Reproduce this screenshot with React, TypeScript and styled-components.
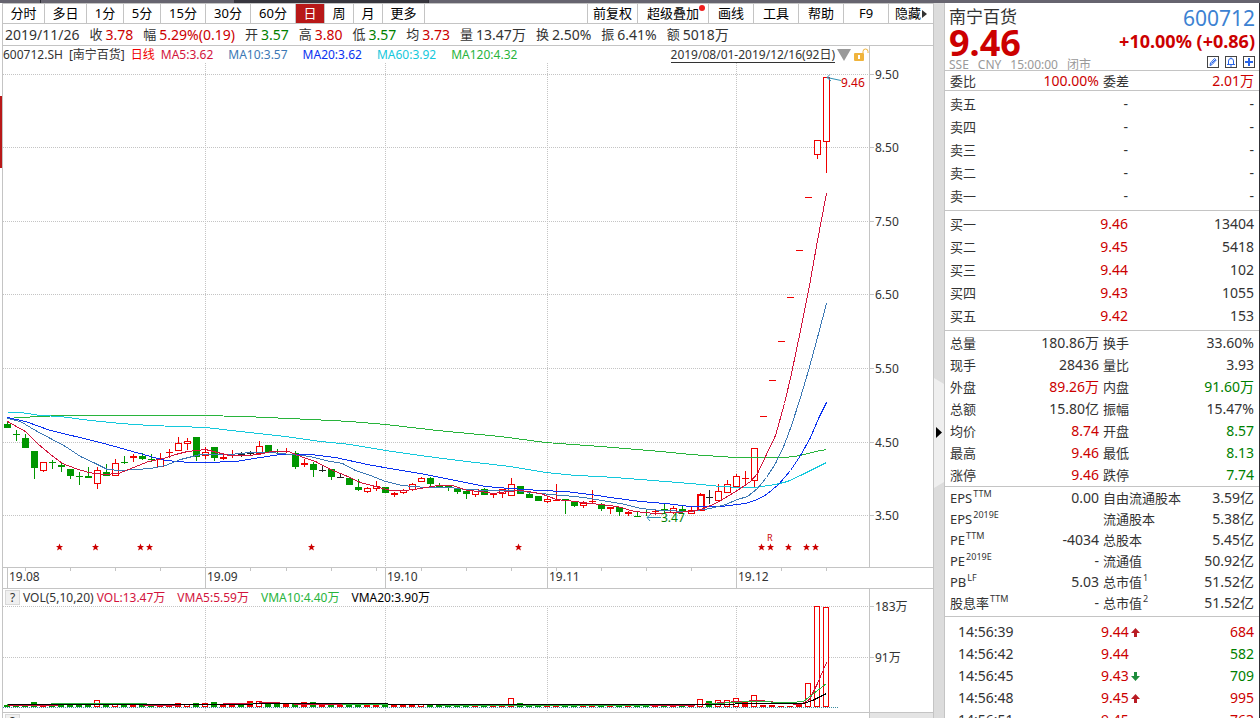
import React from "react";
import styled, { createGlobalStyle } from "styled-components";

const RED = "#cc0000";
const GREEN = "#008000";
const TEXT = "#333333";
const LINE = "#c4c4c4";
const UP = "#f00000";
const DOWN = "#009600";
const MA5 = "#d2143c";
const MA10 = "#3c78b4";
const MA20 = "#0a32f0";
const MA60 = "#14c8dc";
const MA120 = "#28b43c";

const GlobalStyle = createGlobalStyle`
  * { box-sizing: border-box; }
  body {
    margin: 0;
    background: #ffffff;
    color: ${TEXT};
    font-family: "Noto Sans", "Noto Sans CJK SC", sans-serif;
    font-size: 13px;
  }
  button {
    margin: 0;
    padding: 0;
    border: 0;
    background: none;
    color: inherit;
    font: inherit;
    cursor: pointer;
  }
  svg { display: block; }
`;

const Screen = styled.div`
  display: flex;
  flex-direction: column;
  height: 100vh;
  overflow: hidden;
`;
const TopStrip = styled.div`
  flex: none;
  height: 3px;
  background: linear-gradient(
    to right,
    #66646f 40px, #2c2c34 40px, #2c2c34 41px, #66646f 41px, #66646f 234px,
    #37363e 234px, #37363e 428px, #2c2c34 428px, #2c2c34 429px, #66646f 429px
  );
`;
const Body = styled.div`
  display: flex;
  flex: 1;
  min-height: 0;
`;

const Gutter = styled.div`
  display: flex;
  flex-direction: column;
  flex: none;
  width: 3px;
  padding-top: 93px;
  border-right: 1px solid ${LINE};
`;
const ActiveMark = styled.div`
  height: 72px;
  background: #b81818;
`;

const Main = styled.main`
  display: flex;
  flex: 1;
  flex-direction: column;
  min-width: 0;
  border-right: 1px solid ${LINE};
`;

const Toolbar = styled.nav`
  display: flex;
  flex: none;
  height: 21px;
  border-top: 1px solid ${LINE};
  border-bottom: 1px solid ${LINE};
  color: #000000;
`;
const Spacer = styled.div`
  flex: 1;
`;
const PeriodButton = styled.button<{ $width: number; $active?: boolean }>`
  flex: none;
  width: ${(p) => p.$width}px;
  border-right: 1px solid ${LINE};
  background: ${(p) => (p.$active ? "#b81818" : "transparent")};
  color: ${(p) => (p.$active ? "#ffffff" : "inherit")};
  line-height: 19px;
  white-space: nowrap;
`;
const ToolButton = styled.button<{ $wide?: boolean }>`
  position: relative;
  display: flex;
  align-items: center;
  justify-content: center;
  min-width: 45px;
  padding: 0 ${(p) => (p.$wide ? 9 : 5)}px;
  border-left: 1px solid ${LINE};
  line-height: 19px;
  white-space: nowrap;
`;
const NewDot = styled.span`
  position: absolute;
  top: 1px;
  right: 3px;
  width: 6px;
  height: 6px;
  border-radius: 50%;
  background: #f01e1e;
`;

const QuoteRow = styled.div`
  display: flex;
  flex: none;
  align-items: center;
  gap: 10px;
  height: 22px;
  padding-left: 2px;
  border-bottom: 1px solid ${LINE};
  font-size: 14px;
  line-height: 21px;
  white-space: nowrap;
`;
const QuoteItem = styled.span`
  display: flex;
  gap: 3px;
`;
const QuoteLabel = styled.span`
  font-size: 13px;
`;
const Colored = styled.span<{ $color?: string }>`
  color: ${(p) => p.$color ?? "inherit"};
`;

const ChartRow = styled.section<{ $height: number }>`
  display: flex;
  flex: none;
  height: ${(p) => p.$height}px;
  border-bottom: 1px solid ${LINE};
`;
const Plot = styled.div`
  flex: 1;
  min-width: 0;
  overflow: hidden;
`;
const Scale = styled.div`
  flex: none;
  width: 64px;
  border-left: 1px solid ${LINE};
`;
const Legend = styled.div<{ $gap: number }>`
  display: flex;
  align-items: center;
  gap: ${(p) => p.$gap}px;
  height: 17px;
  font-size: 12px;
  line-height: 17px;
  white-space: nowrap;
`;
const LegendTitle = styled.span<{ $gap: number }>`
  display: flex;
  align-items: center;
  gap: ${(p) => p.$gap}px;
`;
const RangeTools = styled.div`
  display: flex;
  align-items: center;
  gap: 2px;
  margin-left: auto;
`;
const RangeButton = styled.button`
  border-bottom: 1px solid ${TEXT};
  line-height: 15px;
`;
const HelpButton = styled.button`
  width: 15px;
  height: 15px;
  margin-left: 2px;
  border: 1px solid #d8d8d8;
  background: #f0f0f0;
  font-size: 12px;
  line-height: 13px;
`;
const TimeAxis = styled.div`
  flex: none;
  height: 21px;
  border-bottom: 1px solid ${LINE};
`;
const NextPane = styled.div`
  display: flex;
  flex: 1;
  min-height: 0;
  overflow: hidden;
  padding-top: 1px;
`;
const NextScale = styled.div`
  width: 64px;
  margin: -1px 0 0 auto;
  border-left: 1px solid ${LINE};
  background: #e4e4e4;
`;
const Drawing = styled.svg`
  width: 100%;
`;

const Grip = styled.button`
  display: flex;
  flex: none;
  align-items: center;
  width: 10px;
  padding-top: 145px;
  background: #dcdcdc;
`;

const Side = styled.aside`
  flex: none;
  width: 316px;
  overflow: hidden;
  border-left: 1px solid ${LINE};
  border-right: 1px solid #303036;
`;
const Head = styled.header`
  display: flex;
  justify-content: space-between;
  height: 68px;
  padding: 3px 4px 0;
  border-bottom: 1px solid ${LINE};
  white-space: nowrap;
`;
const HeadRight = styled.div`
  display: flex;
  flex-direction: column;
  align-items: flex-end;
`;
const StockName = styled.h1`
  margin: 0;
  font-size: 17px;
  font-weight: 400;
  line-height: 22px;
`;
const Price = styled.div`
  color: ${RED};
  font-size: 36px;
  font-weight: 700;
  line-height: 30px;
`;
const Status = styled.div`
  display: flex;
  gap: 9px;
  color: #999999;
  font-size: 12px;
  line-height: 14px;
`;
const Code = styled.div`
  color: #3c82d2;
  font-size: 21px;
  line-height: 24px;
`;
const Change = styled.div`
  color: ${RED};
  font-size: 18px;
  font-weight: 700;
  line-height: 22px;
`;
const HeadTools = styled.div`
  display: flex;
  gap: 6px;
  margin-top: 4px;
`;

const Block = styled.section<{ $top: number; $bottom: number }>`
  padding: ${(p) => p.$top}px 5px ${(p) => p.$bottom}px;
  border-bottom: 1px solid ${LINE};
`;
const Table = styled.table`
  width: 100%;
  border-collapse: collapse;
  table-layout: fixed;
`;
const Row = styled.tr<{ $height: number }>`
  height: ${(p) => p.$height}px;
`;
const Label = styled.th<{ $indent?: number }>`
  padding: 0 0 0 ${(p) => p.$indent ?? 0}px;
  font-size: 13px;
  font-weight: 400;
  line-height: 18px;
  text-align: left;
  white-space: nowrap;
`;
const Value = styled.td<{ $color?: string; $left?: boolean }>`
  padding: 0;
  color: ${(p) => p.$color ?? "inherit"};
  font-size: 14px;
  line-height: 18px;
  text-align: ${(p) => (p.$left ? "left" : "right")};
  white-space: nowrap;
`;
const Sup = styled.sup`
  margin-left: 1px;
  font-size: 9px;
  line-height: 0;
`;
const TickTime = styled.span`
  font-size: 14px;
`;
const TickPrice = styled.span`
  display: flex;
  align-items: center;
  gap: 2px;
`;

const periods: [string, number][] = [
  ["分时", 42], ["多日", 42], ["1分", 37], ["5分", 37], ["15分", 45], ["30分", 45],
  ["60分", 45], ["日", 29], ["周", 29], ["月", 29], ["更多", 42],
];

const quote: [string, string, string?][] = [
  ["收", "3.78", RED],
  ["幅", "5.29%(0.19)", RED],
  ["开", "3.57", GREEN],
  ["高", "3.80", RED],
  ["低", "3.57", GREEN],
  ["均", "3.73", RED],
  ["量", "13.47万"],
  ["换", "2.50%"],
  ["振", "6.41%"],
  ["额", "5018万"],
];

// g: filled green, r: filled red, h: hollow red, k: black
type Kind = "g" | "r" | "h" | "k";
// high, body top, body bottom, low, kind, volume bar height
type Candle = [number, number, number, number, Kind, number];

const candles: Candle[] = [
  [422, 424, 428, 428, "g", 2], [430, 434, 435, 441, "g", 2], [434, 438, 448, 448, "g", 2],
  [451, 451, 468, 479, "g", 5], [462, 462, 471, 472, "h", 3], [460, 462, 463, 469, "g", 2],
  [462, 465, 467, 472, "g", 2], [469, 469, 476, 479, "g", 2], [472, 476, 477, 485, "g", 4],
  [467, 476, 478, 478, "g", 2], [467, 470, 484, 489, "h", 7], [464, 472, 476, 476, "g", 4],
  [459, 463, 476, 476, "h", 3], [456, 462, 463, 464, "g", 3], [454, 456, 458, 462, "r", 3],
  [453, 456, 459, 460, "g", 2], [454, 459, 460, 462, "g", 2], [453, 458, 467, 467, "h", 2],
  [449, 452, 453, 458, "r", 2], [437, 443, 451, 451, "h", 4], [438, 441, 444, 450, "h", 3],
  [437, 437, 457, 461, "g", 4], [447, 452, 456, 459, "h", 4], [447, 447, 458, 461, "g", 5],
  [455, 457, 459, 460, "r", 3], [450, 455, 456, 458, "r", 3], [452, 454, 455, 457, "k", 3],
  [451, 453, 454, 455, "k", 6], [441, 446, 454, 454, "h", 6], [445, 445, 452, 452, "g", 4],
  [449, 451, 452, 453, "g", 3], [448, 451, 452, 453, "r", 3], [451, 453, 467, 469, "g", 4],
  [459, 463, 465, 467, "r", 5], [462, 464, 470, 477, "g", 5], [466, 470, 471, 472, "k", 2],
  [469, 469, 477, 480, "g", 3], [473, 477, 478, 478, "k", 2], [478, 478, 485, 485, "g", 3],
  [479, 487, 490, 491, "g", 3], [487, 488, 492, 493, "h", 2], [481, 486, 489, 491, "h", 2],
  [487, 487, 493, 493, "g", 3], [492, 493, 495, 497, "r", 2], [489, 490, 493, 494, "h", 2],
  [483, 484, 490, 491, "h", 2], [477, 478, 482, 482, "h", 3], [477, 478, 484, 486, "g", 3],
  [483, 485, 488, 488, "g", 2], [485, 486, 487, 491, "g", 2], [487, 488, 492, 494, "g", 2],
  [490, 491, 494, 499, "g", 2], [489, 489, 495, 497, "h", 3], [488, 489, 495, 495, "g", 2],
  [493, 493, 495, 498, "r", 2], [489, 489, 494, 498, "h", 3], [478, 484, 496, 496, "h", 9],
  [486, 486, 494, 494, "g", 4], [493, 494, 498, 498, "g", 3], [496, 496, 501, 501, "g", 3],
  [496, 499, 502, 503, "h", 2], [484, 500, 501, 501, "r", 3], [499, 499, 500, 514, "g", 3],
  [501, 502, 506, 507, "g", 2], [501, 503, 506, 508, "h", 2], [490, 501, 502, 503, "r", 3],
  [503, 504, 509, 511, "g", 2], [507, 507, 509, 514, "r", 2], [507, 507, 512, 516, "g", 2],
  [511, 512, 514, 516, "r", 2], [512, 516, 517, 517, "g", 2], [509, 512, 513, 516, "g", 2],
  [509, 511, 512, 515, "r", 2], [504, 509, 510, 514, "g", 2], [506, 508, 513, 514, "h", 2],
  [505, 509, 512, 514, "g", 2], [507, 510, 514, 514, "h", 3], [493, 494, 510, 510, "h", 8],
  [490, 497, 498, 504, "k", 6], [484, 491, 501, 501, "h", 7], [480, 484, 493, 493, "h", 7],
  [474, 476, 487, 487, "h", 9], [471, 478, 479, 484, "r", 5], [448, 448, 481, 488, "h", 12],
  [416, 416, 417, 417, "r", 2], [380, 380, 381, 381, "r", 2], [341, 341, 342, 342, "r", 1],
  [297, 297, 298, 298, "r", 1], [250, 250, 251, 251, "r", 2], [197, 197, 198, 198, "r", 24],
  [140, 140, 155, 159, "h", 101], [77, 77, 142, 173, "h", 100],
];

const averages = [
  { color: MA120, points: "7,418 20,417 60,415 200,415 245,416 310,419 350,421 385,424 437,430 500,436 545,442 600,446 660,451 690,454 735,457 785,457 800,455 815,451 826,449" },
  { color: MA60, points: "7,412 20,412 40,415 60,416 90,420 120,423 150,425 205,427 240,431 285,436 320,441 350,444 385,450 420,455 450,459 475,462 510,466 545,472 575,475 600,476 640,479 690,483 720,486 740,487 755,487 775,484 787,481 800,475 810,470 826,462" },
  { color: MA20, points: "7,417 25,421 50,430 75,436 100,442 125,449 150,456 165,460 190,462 205,462 235,461 260,457 280,454 310,454 335,457 367,464 395,469 425,474 455,480 485,486 510,488 540,490 565,491 590,494 610,497 640,501 665,503 690,506 720,506 745,503 757,499 766,494 778,484 790,470 800,455 810,437 818,418 826,402" },
  { color: MA10, points: "7,418 20,421 35,430 50,438 65,446 80,456 95,463 107,469 120,470 150,468 165,465 180,459 200,454 230,454 250,452 270,452 290,454 310,456 325,460 342,463 355,470 370,475 385,481 402,485 425,487 450,487 465,489 490,490 515,490 530,492 550,494 575,496 590,498 607,501 625,504 640,508 660,510 690,511 710,508 725,504 737,499 747,496 757,488 766,477 775,463 784,444 791,425 800,397 808,370 817,337 826,303" },
  { color: MA5, points: "7,421 14,425 25,431 37,443 50,454 62,463 75,468 88,472 103,474 118,473 133,467 148,461 163,458 175,454 187,451 205,449 217,452 229,455 247,455 259,454 270,451 288,451 303,457 315,461 330,469 345,475 360,482 375,486 390,490 405,490 420,488 437,485 452,485 467,490 480,491 493,493 507,491 520,490 540,493 556,499 575,501 590,503 600,504 617,506 634,511 655,513 675,512 690,511 700,509 715,503 737,490 750,481 757,473 766,454 775,435 784,403 791,373 800,330 809,285 817,240 826,193" },
];

const volumeAverages = [
  { color: MA5, points: "7,705 22,705 94,704 125,704 160,705 200,704 245,703 272,702 300,704 380,704 520,704 560,705 690,705 710,703 737,701 760,700 785,703 800,704 809,699 817,683 826,662" },
  { color: MA120, points: "7,704 94,703 200,704 300,703 380,704 500,705 600,705 700,704 750,701 790,702 803,701 817,690 826,683" },
  { color: "#000000", points: "7,704 245,704 260,703 385,703 390,704 730,704 740,703 803,703 812,700 826,693" },
];

const months: [number, string][] = [[7, "19.08"], [205, "19.09"], [385, "19.10"], [547, "19.11"], [736, "19.12"]];
const weeks = [25, 70, 115, 160, 250, 286, 331, 376, 421, 466, 511, 556, 601, 646, 691, 781, 826];
const priceLevels: [number, string][] = [
  [74, "9.50"], [147, "8.50"], [221, "7.50"], [294, "6.50"], [368, "5.50"], [442, "4.50"], [515, "3.50"],
];
const events = [59, 95, 140, 149, 311, 518, 761, 770, 788, 806, 815];

const kindColor: Record<Kind, string> = { g: DOWN, r: UP, h: UP, k: "#222222" };

function Grid({ levels, top, bottom }: { levels: number[]; top: number; bottom: number }) {
  return (
    <g stroke={LINE} strokeDasharray="1 1" shapeRendering="crispEdges">
      {levels.map((y) => (
        <line key={y} x1="3" x2="4000" y1={y + 0.5} y2={y + 0.5} />
      ))}
      {months.slice(1).map(([x]) => (
        <line key={x} x1={x + 0.5} x2={x + 0.5} y1={top} y2={bottom} />
      ))}
    </g>
  );
}

function Lines({ items }: { items: { color: string; points: string }[] }) {
  return (
    <g transform="translate(0.5 0.5)" fill="none" shapeRendering="crispEdges">
      {items.map((m) => (
        <polyline key={m.color} points={m.points} stroke={m.color} />
      ))}
    </g>
  );
}

function PriceChart() {
  return (
    <Drawing height="504" role="img" aria-label="K线图">
      <g transform="translate(-3 -63)">
        <Grid levels={priceLevels.map(([y]) => y)} top={63} bottom={567} />
        <g shapeRendering="crispEdges">
          {candles.map(([high, top, bottom, low, kind], i) => {
            const x = 7 + 9 * i;
            const color = kindColor[kind];
            return (
              <g key={i} fill={color}>
                <rect x={x} y={high} width="1" height={top - high} />
                <rect x={x} y={bottom} width="1" height={low - bottom} />
                {kind === "h" ? (
                  <rect x={x - 2.5} y={top + 0.5} width="6" height={bottom - top - 1} fill="#ffffff" stroke={color} strokeWidth={i === 77 ? 2 : 1} />
                ) : (
                  <rect x={x - 3} y={top} width="7" height={bottom - top} />
                )}
              </g>
            );
          })}
        </g>
        <Lines items={averages} />
        <g fill="none" stroke="#3090b4">
          <path d="M841 80.5L827 77.5M830 74.5L827 77.5L831 81" />
          <path d="M661 517.5H647M651 514L647 517.5L650 521" />
        </g>
        <g fontSize="12">
          <text x="841" y="87" fill={RED}>9.46</text>
          <text x="661" y="522" fill={GREEN}>3.47</text>
          <text x="767" y="541" fontSize="9" fill={RED}>R</text>
        </g>
        <g fill={RED}>
          {events.map((x) => (
            <path key={x} transform={`translate(${x + 0.5} 547)`} d="M0-3.5L1-1H3.5L1.5.8L2.5 3.5L0 2L-2.5 3.5L-1.5.8L-3.5-1H-1Z" />
          ))}
        </g>
      </g>
    </Drawing>
  );
}

function VolumeChart() {
  return (
    <Drawing height="106" role="img" aria-label="成交量">
      <g transform="translate(-3 -606)">
        <Grid levels={[606, 657]} top={606} bottom={712} />
        <g shapeRendering="crispEdges">
          {candles.map(([, , , , kind, volume], i) => {
            const x = 7 + 9 * i;
            const color = kind === "k" ? (i % 2 ? UP : DOWN) : kindColor[kind];
            return (kind === "h" || i === 89) && volume > 2 ? (
              <rect key={i} x={x - 2.5} y={707.5 - volume} width="5" height={volume - 1} fill="#ffffff" stroke={color} />
            ) : (
              <rect key={i} x={x - 3} y={707 - volume} width="6" height={volume} fill={color} />
            );
          })}
          <line x1="3" x2="838" y1="707.5" y2="707.5" stroke="#3c8ca0" strokeDasharray="1 1" />
        </g>
        <Lines items={volumeAverages} />
      </g>
    </Drawing>
  );
}

function ScaleMarks({ marks, top, height }: { marks: [number, string][]; top: number; height: number }) {
  return (
    <Drawing height={height}>
      <g transform={`translate(0 ${-top})`} fontSize="12" fill={TEXT}>
        {marks.map(([y, label]) => (
          <g key={label}>
            <rect x="0" y={y} width="4" height="1" fill={LINE} />
            <text x="5" y={y + 5}>{label}</text>
          </g>
        ))}
      </g>
    </Drawing>
  );
}

function TimeMarks() {
  return (
    <Drawing height="20">
      <g transform="translate(-3 0)" fontSize="12" fill={TEXT}>
        {weeks.map((x) => (
          <rect key={x} x={x} y="0" width="1" height="3" fill={LINE} />
        ))}
        {months.map(([x, label]) => (
          <g key={x}>
            <rect x={x} y="0" width="1" height="20" fill={LINE} />
            <text x={x + 2} y="13">{label}</text>
          </g>
        ))}
      </g>
    </Drawing>
  );
}

function Lock() {
  return (
    <svg width="16" height="16" viewBox="0 0 16 16">
      <rect x="1" y="6" width="10" height="8" rx="1" fill="#f0b43c" />
      <path d="M10 6V4.5A2.5 2.5 0 0 1 15 4.5V6" fill="none" stroke="#f0b43c" />
      <rect x="5" y="8" width="2" height="4" fill="#ffffff" />
    </svg>
  );
}

function ToolIcon({ children }: { children: React.ReactNode }) {
  return (
    <svg width="12" height="12" viewBox="0 0 12 12" fill="none" stroke="#2864e6">
      <rect x="0.5" y="0.5" width="11" height="11" stroke="#444444" />
      {children}
    </svg>
  );
}

function TickArrow({ up }: { up: boolean }) {
  return (
    <svg width="9" height="9" viewBox="0 0 9 9">
      <path
        d="M4.5 0L9 5H6V9H3V5H0Z"
        fill={up ? "#b91c24" : "#1e8c3c"}
        transform={up ? undefined : "rotate(180 4.5 4.5)"}
      />
    </svg>
  );
}

const asks = ["卖五", "卖四", "卖三", "卖二", "卖一"];
const bids: [string, string, string][] = [
  ["买一", "9.46", "13404"],
  ["买二", "9.45", "5418"],
  ["买三", "9.44", "102"],
  ["买四", "9.43", "1055"],
  ["买五", "9.42", "153"],
];

type Cell = { label: string; sup?: string; value: string; color?: string };
const stats: [Cell, Cell][] = [
  [{ label: "总量", value: "180.86万" }, { label: "换手", value: "33.60%" }],
  [{ label: "现手", value: "28436" }, { label: "量比", value: "3.93" }],
  [{ label: "外盘", value: "89.26万", color: RED }, { label: "内盘", value: "91.60万", color: GREEN }],
  [{ label: "总额", value: "15.80亿" }, { label: "振幅", value: "15.47%" }],
  [{ label: "均价", value: "8.74", color: RED }, { label: "开盘", value: "8.57", color: GREEN }],
  [{ label: "最高", value: "9.46", color: RED }, { label: "最低", value: "8.13", color: GREEN }],
  [{ label: "涨停", value: "9.46", color: RED }, { label: "跌停", value: "7.74", color: GREEN }],
];
const ratios: [Cell, Cell][] = [
  [{ label: "EPS", sup: "TTM", value: "0.00" }, { label: "自由流通股本", value: "3.59亿" }],
  [{ label: "EPS", sup: "2019E", value: "" }, { label: "流通股本", value: "5.38亿" }],
  [{ label: "PE", sup: "TTM", value: "-4034" }, { label: "总股本", value: "5.45亿" }],
  [{ label: "PE", sup: "2019E", value: "-" }, { label: "流通值", value: "50.92亿" }],
  [{ label: "PB", sup: "LF", value: "5.03" }, { label: "总市值", sup: "1", value: "51.52亿" }],
  [{ label: "股息率", sup: "TTM", value: "-" }, { label: "总市值", sup: "2", value: "51.52亿" }],
];
const ticks: [string, string, string, string, string][] = [
  ["14:56:39", "9.44", "up", "684", RED],
  ["14:56:42", "9.44", "", "582", GREEN],
  ["14:56:45", "9.43", "down", "709", GREEN],
  ["14:56:48", "9.45", "up", "995", RED],
  ["14:56:51", "9.45", "", "763", RED],
];

function PairTable({ rows, height }: { rows: [Cell, Cell][]; height: number }) {
  return (
    <Table>
      <colgroup>
        <col width="60" />
        <col width="89" />
        <col width="88" />
        <col />
      </colgroup>
      <tbody>
        {rows.map((pair, i) => (
          <Row key={i} $height={height}>
            {pair.map((c, j) => (
              <React.Fragment key={j}>
                <Label scope="row" $indent={j ? 4 : 0}>
                  {c.label}
                  {c.sup && <Sup>{c.sup}</Sup>}
                </Label>
                <Value $color={c.color}>{c.value}</Value>
              </React.Fragment>
            ))}
          </Row>
        ))}
      </tbody>
    </Table>
  );
}

function OrderTable({ rows }: { rows: [string, string, string][] }) {
  return (
    <Table>
      <colgroup>
        <col width="60" />
        <col width="118" />
        <col />
      </colgroup>
      <tbody>
        {rows.map(([label, price, amount]) => (
          <Row key={label} $height={23}>
            <Label scope="row">{label}</Label>
            <Value $color={price === "-" ? undefined : RED}>{price}</Value>
            <Value>{amount}</Value>
          </Row>
        ))}
      </tbody>
    </Table>
  );
}

export default function App() {
  return (
    <Screen>
      <GlobalStyle />
      <TopStrip />
      <Body>
        <Gutter>
          <ActiveMark />
        </Gutter>
        <Main>
          <Toolbar>
            {periods.map(([label, width]) => (
              <PeriodButton key={label} $width={width} $active={label === "日"}>{label}</PeriodButton>
            ))}
            <Spacer />
            <ToolButton>前复权</ToolButton>
            <ToolButton $wide>超级叠加<NewDot /></ToolButton>
            <ToolButton>画线</ToolButton>
            <ToolButton>工具</ToolButton>
            <ToolButton>帮助</ToolButton>
            <ToolButton>F9</ToolButton>
            <ToolButton>
              隐藏
              <svg width="6" height="8" viewBox="0 0 6 8"><path d="M1 0L6 4L1 8Z" fill="#333333" /></svg>
            </ToolButton>
          </Toolbar>

          <QuoteRow>
            <span>2019/11/26</span>
            {quote.map(([label, value, color]) => (
              <QuoteItem key={label}>
                <QuoteLabel>{label}</QuoteLabel>
                <Colored $color={color}>{value}</Colored>
              </QuoteItem>
            ))}
          </QuoteRow>

          <ChartRow $height={522}>
            <Plot>
              <Legend $gap={15}>
                <LegendTitle $gap={6}>
                  <span>600712.SH</span>
                  <span>[南宁百货]</span>
                  <Colored $color="#f00000">日线</Colored>
                  <Colored $color={MA5}>MA5:3.62</Colored>
                </LegendTitle>
                <Colored $color={MA10}>MA10:3.57</Colored>
                <Colored $color={MA20}>MA20:3.62</Colored>
                <Colored $color={MA60}>MA60:3.92</Colored>
                <Colored $color={MA120}>MA120:4.32</Colored>
                <RangeTools>
                  <RangeButton>2019/08/01-2019/12/16(92日)</RangeButton>
                  <svg width="14" height="12" viewBox="0 0 14 12"><path d="M0 0H14L7 12Z" fill="#999999" /></svg>
                  <Lock />
                </RangeTools>
              </Legend>
              <PriceChart />
            </Plot>
            <Scale>
              <ScaleMarks marks={priceLevels} top={46} height={521} />
            </Scale>
          </ChartRow>

          <TimeAxis>
            <TimeMarks />
          </TimeAxis>

          <ChartRow $height={124}>
            <Plot>
              <Legend $gap={12}>
                <LegendTitle $gap={3}>
                  <HelpButton aria-label="帮助说明">?</HelpButton>
                  <span>VOL(5,10,20)</span>
                  <Colored $color={MA5}>VOL:13.47万</Colored>
                </LegendTitle>
                <Colored $color={MA5}>VMA5:5.59万</Colored>
                <Colored $color={MA120}>VMA10:4.40万</Colored>
                <Colored $color="#000000">VMA20:3.90万</Colored>
              </Legend>
              <VolumeChart />
            </Plot>
            <Scale>
              <ScaleMarks marks={[[606, "183万"], [657, "91万"]]} top={589} height={123} />
            </Scale>
          </ChartRow>

          <NextPane>
            <HelpButton aria-label="指标说明">?</HelpButton>
            <NextScale />
          </NextPane>
        </Main>

        <Grip aria-label="收起侧栏">
          <svg width="10" height="110" viewBox="0 0 10 110">
            <path d="M0 0L10 6V104L0 110Z" fill="#efefef" />
            <path d="M2 49L8 54.5L2 60Z" fill="#000000" />
          </svg>
        </Grip>

        <Side>
          <Head>
            <div>
              <StockName>南宁百货</StockName>
              <Price>9.46</Price>
              <Status>
                <span>SSE</span>
                <span>CNY</span>
                <span>15:00:00</span>
                <span>闭市</span>
              </Status>
            </div>
            <HeadRight>
              <Code>600712</Code>
              <Change>+10.00% (+0.86)</Change>
              <HeadTools>
                <button aria-label="编辑">
                  <ToolIcon><path d="M3 9.5L3.5 7L7.5 2.5L9.2 4L5.2 8.5ZM4.5 7.5L8 4" /></ToolIcon>
                </button>
                <button aria-label="提醒">
                  <ToolIcon><path d="M2 8.5H10M3.5 8.5V5A2.5 2.5 0 0 1 8.5 5V8.5M5 10H7M6 1.5V2.5" /></ToolIcon>
                </button>
                <button aria-label="添加">
                  <ToolIcon><path d="M6 2V10M2 6H10" strokeWidth="2" /></ToolIcon>
                </button>
              </HeadTools>
            </HeadRight>
          </Head>

          <Block $top={1} $bottom={0}>
            <PairTable
              height={18}
              rows={[[{ label: "委比", value: "100.00%", color: RED }, { label: "委差", value: "2.01万", color: RED }]]}
            />
          </Block>
          <Block $top={1} $bottom={3}>
            <OrderTable rows={asks.map((a) => [a, "-", "-"])} />
          </Block>
          <Block $top={1} $bottom={3}>
            <OrderTable rows={bids} />
          </Block>
          <Block $top={1} $bottom={0}>
            <PairTable rows={stats} height={22} />
          </Block>
          <Block $top={0} $bottom={3}>
            <PairTable rows={ratios} height={21} />
          </Block>
          <Block $top={4} $bottom={0}>
            <Table>
              <colgroup>
                <col width="151" />
                <col width="60" />
                <col />
              </colgroup>
              <tbody>
                {ticks.map(([time, price, move, amount, color]) => (
                  <Row key={time} $height={22}>
                    <Label scope="row" $indent={8}><TickTime>{time}</TickTime></Label>
                    <Value $color={RED} $left>
                      <TickPrice>
                        {price}
                        {move && <TickArrow up={move === "up"} />}
                      </TickPrice>
                    </Value>
                    <Value $color={color}>{amount}</Value>
                  </Row>
                ))}
              </tbody>
            </Table>
          </Block>
        </Side>
      </Body>
    </Screen>
  );
}
